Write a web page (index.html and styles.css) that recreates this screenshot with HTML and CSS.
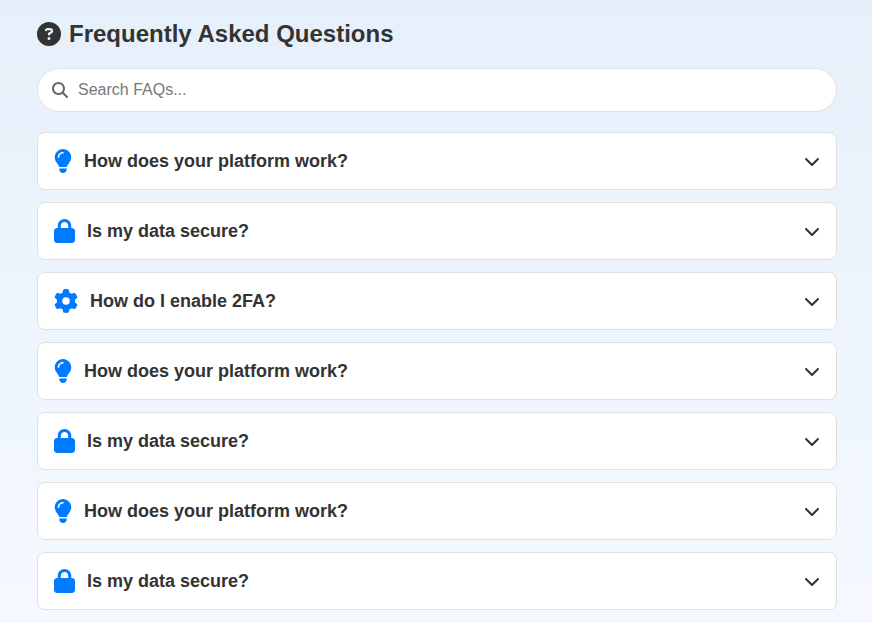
FILE: index.html
```html
<!DOCTYPE html>
<html lang="en">
<head>
<meta charset="utf-8">
<title>FAQ</title>
<link rel="stylesheet" href="styles.css">
</head>
<body>
<svg class="defs" aria-hidden="true">
  <defs>
    <symbol id="i-bulb" viewBox="0 0 384 512"><path d="M272 384c9.6-31.9 29.5-59.1 49.2-86.2l0 0c5.2-7.1 10.4-14.2 15.4-21.4c19.8-28.5 31.4-63 31.4-100.3C368 78.8 289.2 0 192 0S16 78.8 16 176c0 37.3 11.6 71.9 31.4 100.3c5 7.2 10.2 14.3 15.4 21.4l0 0c19.8 27.1 39.7 54.4 49.2 86.2H272zM192 512c44.2 0 80-35.8 80-80V416H112v16c0 44.2 35.8 80 80 80zM112 176c0 8.8-7.2 16-16 16s-16-7.2-16-16c0-61.9 50.1-112 112-112c8.8 0 16 7.2 16 16s-7.2 16-16 16c-44.2 0-80 35.8-80 80z"/></symbol>
    <symbol id="i-lock" viewBox="0 0 448 512"><path d="M144 144v48H304V144c0-44.2-35.8-80-80-80s-80 35.8-80 80zM80 192V144C80 64.5 144.5 0 224 0s144 64.5 144 144v48h16c35.3 0 64 28.7 64 64V448c0 35.3-28.7 64-64 64H64c-35.3 0-64-28.7-64-64V256c0-35.3 28.7-64 64-64H80z"/></symbol>
    <symbol id="i-gear" viewBox="0 0 512 512"><path d="M495.9 166.6c3.2 8.7 .5 18.4-6.4 24.6l-43.3 39.4c1.1 8.3 1.7 16.8 1.7 25.4s-.6 17.1-1.7 25.4l43.3 39.4c6.9 6.2 9.6 15.9 6.4 24.6c-4.4 11.9-9.7 23.3-15.8 34.3l-4.7 8.1c-6.6 11-14 21.4-22.1 31.2c-5.9 7.2-15.7 9.6-24.5 6.8l-55.7-17.7c-13.4 10.3-28.2 18.9-44 25.4l-12.5 57.1c-2 9.1-9 16.3-18.2 17.8c-13.8 2.3-28 3.5-42.5 3.5s-28.7-1.2-42.5-3.5c-9.2-1.5-16.2-8.7-18.2-17.8l-12.5-57.1c-15.8-6.5-30.6-15.1-44-25.4L83.1 425.9c-8.8 2.8-18.6 .3-24.5-6.8c-8.1-9.8-15.5-20.2-22.1-31.2l-4.7-8.1c-6.1-11-11.4-22.4-15.8-34.3c-3.2-8.7-.5-18.4 6.4-24.6l43.3-39.4C64.6 273.1 64 264.6 64 256s.6-17.1 1.7-25.4L22.4 191.2c-6.9-6.2-9.6-15.9-6.4-24.6c4.4-11.9 9.7-23.3 15.8-34.3l4.7-8.1c6.6-11 14-21.4 22.1-31.2c5.9-7.2 15.7-9.6 24.5-6.8l55.7 17.7c13.4-10.3 28.2-18.9 44-25.4l12.5-57.1c2-9.1 9-16.3 18.2-17.8C227.3 1.2 241.5 0 256 0s28.7 1.2 42.5 3.5c9.2 1.5 16.2 8.7 18.2 17.8l12.5 57.1c15.8 6.5 30.6 15.1 44 25.4l55.7-17.7c8.8-2.8 18.6-.3 24.5 6.8c8.1 9.8 15.5 20.2 22.1 31.2l4.7 8.1c6.1 11 11.4 22.4 15.8 34.3zM256 336a80 80 0 1 0 0-160 80 80 0 1 0 0 160z"/></symbol>
    <symbol id="i-chev" viewBox="0 0 512 512"><path d="M233.4 406.6c12.5 12.5 32.8 12.5 45.3 0l192-192c12.5-12.5 12.5-32.8 0-45.3s-32.8-12.5-45.3 0L256 338.7 86.6 169.4c-12.5-12.5-32.8-12.5-45.3 0s-12.5 32.8 0 45.3l192 192z"/></symbol>
  </defs>
</svg>
<main class="faq">
  <h1 class="faq-title">
    <svg class="title-icon" viewBox="0 0 512 512"><path d="M256 512A256 256 0 1 0 256 0a256 256 0 1 0 0 512zM169.8 165.3c7.9-22.3 29.1-37.3 52.8-37.3h58.3c34.9 0 63.1 28.3 63.1 63.1c0 22.6-12.1 43.5-31.7 54.8L280 264.4c-.2 13-10.9 23.6-24 23.6c-13.3 0-24-10.7-24-24V250.5c0-8.6 4.6-16.5 12.1-20.8l44.3-25.4c4.7-2.7 7.6-7.7 7.6-13.1c0-8.4-6.8-15.1-15.1-15.1H222.6c-3.4 0-6.4 2.1-7.5 5.3l-.4 1.2c-4.4 12.5-18.2 19-30.6 14.6s-19-18.2-14.6-30.6l.4-1.2zM224 352a32 32 0 1 1 64 0 32 32 0 1 1 -64 0z"/></svg>
    Frequently Asked Questions
  </h1>
  <label class="search">
    <svg class="search-icon" viewBox="0 0 512 512"><path d="M416 208c0 45.9-14.9 88.3-40 122.7L502.6 457.4c12.5 12.5 12.5 32.8 0 45.3s-32.8 12.5-45.3 0L330.7 376c-34.4 25.2-76.8 40-122.7 40C93.1 416 0 322.9 0 208S93.1 0 208 0S416 93.1 416 208zM208 352a144 144 0 1 0 0-288 144 144 0 1 0 0 288z"/></svg>
    <input class="search-input" type="text" placeholder="Search FAQs...">
  </label>
  <div class="faq-list">
    <div class="faq-item">
      <svg class="q-icon bulb"><use href="#i-bulb"/></svg>
      <span class="q-text">How does your platform work?</span>
      <svg class="chev"><use href="#i-chev"/></svg>
    </div>
    <div class="faq-item">
      <svg class="q-icon lock"><use href="#i-lock"/></svg>
      <span class="q-text">Is my data secure?</span>
      <svg class="chev"><use href="#i-chev"/></svg>
    </div>
    <div class="faq-item">
      <svg class="q-icon gear"><use href="#i-gear"/></svg>
      <span class="q-text">How do I enable 2FA?</span>
      <svg class="chev"><use href="#i-chev"/></svg>
    </div>
    <div class="faq-item">
      <svg class="q-icon bulb"><use href="#i-bulb"/></svg>
      <span class="q-text">How does your platform work?</span>
      <svg class="chev"><use href="#i-chev"/></svg>
    </div>
    <div class="faq-item">
      <svg class="q-icon lock"><use href="#i-lock"/></svg>
      <span class="q-text">Is my data secure?</span>
      <svg class="chev"><use href="#i-chev"/></svg>
    </div>
    <div class="faq-item">
      <svg class="q-icon bulb"><use href="#i-bulb"/></svg>
      <span class="q-text">How does your platform work?</span>
      <svg class="chev"><use href="#i-chev"/></svg>
    </div>
    <div class="faq-item">
      <svg class="q-icon lock"><use href="#i-lock"/></svg>
      <span class="q-text">Is my data secure?</span>
      <svg class="chev"><use href="#i-chev"/></svg>
    </div>
  </div>
</main>
</body>
</html>
```

FILE: styles.css
```css
* { box-sizing: border-box; }
html, body { margin: 0; height: 100%; }
body {
  background: linear-gradient(180deg, #e6f0fa 0%, #f5f9ff 100%);
  font-family: "Liberation Sans", Arial, sans-serif;
  color: #333;
  overflow: hidden;
}
.defs { display: none; }
.faq {
  width: 800px;
  margin-left: 37px;
  padding-top: 20px;
}
.faq-title {
  display: flex;
  align-items: center;
  gap: 8px;
  margin: 0 0 20px;
  font-size: 24px;
  line-height: 28px;
  font-weight: 700;
  color: #333;
}
.title-icon { width: 24px; height: 24px; fill: #333; flex: none; }
.search {
  display: flex;
  align-items: center;
  gap: 10px;
  height: 44px;
  padding: 0 14px;
  background: #fff;
  border: 1px solid #e0e0e0;
  border-radius: 22px;
}
.search-icon { width: 16px; height: 16px; fill: #666; flex: none; }
.search-input {
  flex: 1;
  border: 0;
  outline: 0;
  padding: 0;
  background: transparent;
  font: 16px "Liberation Sans", Arial, sans-serif;
  color: #333;
}
.search-input::placeholder { color: #777; opacity: 1; }
.faq-list {
  display: flex;
  flex-direction: column;
  gap: 12px;
  margin-top: 20px;
}
.faq-item {
  display: flex;
  align-items: center;
  gap: 12px;
  height: 58px;
  padding: 0 16px;
  background: #fff;
  border: 1px solid #e0e0e0;
  border-radius: 8px;
}
.q-icon { height: 24px; fill: #007bff; flex: none; }
.bulb { width: 18px; }
.lock { width: 21px; }
.gear { width: 24px; }
.q-text { flex: 1; font-size: 18px; font-weight: 700; color: #333; }
.chev { width: 16px; height: 16px; fill: #333; flex: none; }
```
